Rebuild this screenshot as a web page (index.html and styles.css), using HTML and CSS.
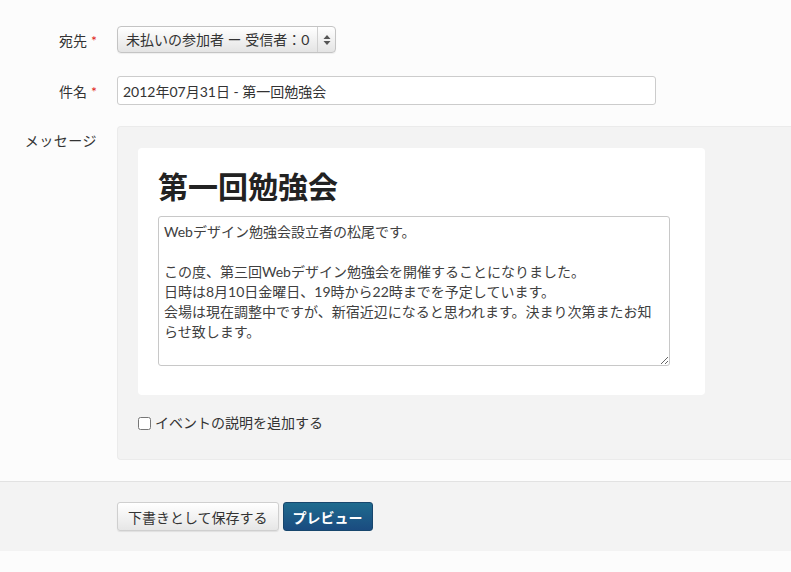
FILE: index.html
```html
<!DOCTYPE html>
<html lang="ja">
<head>
    <meta charset="UTF-8">
    <meta name="viewport" content="width=device-width, initial-scale=1.0">
    <link rel="stylesheet" href="styles.css">
    <title>メッセージ送信</title>
</head>
<body>
    <form class="mail-form">
        <div class="form-row row-to">
            <label class="form-label">宛先<span class="req">*</span></label>
            <div class="select-box">
                <span class="select-text">未払いの参加者 ー 受信者：0</span>
                <span class="select-arrows">
                    <svg width="8" height="12" viewBox="0 0 8 12">
                        <path d="M4 1 L7.5 5 L0.5 5 Z" fill="#555"/>
                        <path d="M4 11 L7.5 7 L0.5 7 Z" fill="#555"/>
                    </svg>
                </span>
            </div>
        </div>

        <div class="form-row row-subject">
            <label class="form-label" for="subject">件名<span class="req">*</span></label>
            <input type="text" id="subject" class="text-input" value="2012年07月31日 - 第一回勉強会">
        </div>

        <div class="form-row row-message">
            <label class="form-label label-message">メッセージ</label>
            <div class="message-panel">
                <div class="message-card">
                    <h1 class="message-title">第一回勉強会</h1>
                    <textarea class="message-body">Webデザイン勉強会設立者の松尾です。

この度、第三回Webデザイン勉強会を開催することになりました。
日時は8月10日金曜日、19時から22時までを予定しています。
会場は現在調整中ですが、新宿近辺になると思われます。決まり次第またお知らせ致します。

今回の勉強会はレスポンシブデザインをテーマに、実例を交えながら進めていく予定です。</textarea>
                </div>
                <label class="check-row">
                    <input type="checkbox" class="check">
                    <span>イベントの説明を追加する</span>
                </label>
            </div>
        </div>

        <div class="form-actions">
            <button type="button" class="btn btn-default">下書きとして保存する</button>
            <button type="button" class="btn btn-primary">プレビュー</button>
        </div>
    </form>
</body>
</html>
```

FILE: styles.css
```css
body {
    margin: 0;
    background-color: #fcfcfc;
    font-family: Lato, "Noto Sans CJK JP", sans-serif;
    font-size: 14px;
    color: #333;
    overflow: hidden;
}

.mail-form {
    padding-top: 26px;
}

.form-row {
    display: flex;
    align-items: center;
}

.row-to {
    margin-bottom: 23px;
}

.row-subject {
    margin-bottom: 21px;
}

.row-message {
    align-items: flex-start;
    margin-bottom: 21px;
}

.form-label {
    width: 97px;
    margin-right: 20px;
    text-align: right;
    color: #333;
    flex-shrink: 0;
}

.label-message {
    padding-top: 4px;
    letter-spacing: 0.5px;
}

.req {
    color: #e02020;
    margin-left: 4px;
}

.select-box {
    display: flex;
    align-items: stretch;
    width: 217px;
    height: 25px;
    border: 1px solid #c4c4c4;
    border-radius: 4px;
    background: linear-gradient(#ffffff, #e4e4e4);
    box-shadow: 0 1px 1px rgba(0, 0, 0, 0.06);
}

.select-text {
    flex: 1;
    padding-left: 8px;
    line-height: 25px;
    color: #333;
}

.select-arrows {
    display: flex;
    align-items: center;
    justify-content: center;
    width: 17px;
    border-left: 1px solid #d0d0d0;
}

.text-input {
    width: 527px;
    height: 27px;
    padding: 0 5px;
    border: 1px solid #cccccc;
    border-radius: 3px;
    background: #fff;
    font-family: Lato, "Noto Sans CJK JP", sans-serif;
    font-size: 14px;
    color: #333;
    box-sizing: content-box;
}

.message-panel {
    flex: 1;
    padding: 21px 0 26px 20px;
    background-color: #f3f3f3;
    border: 1px solid #ebebeb;
    border-right: none;
    border-radius: 4px 0 0 4px;
}

.message-card {
    width: 527px;
    padding: 20px 20px 29px 20px;
    background-color: #fff;
    border-radius: 4px;
}

.message-title {
    margin: 0 0 12px;
    font-size: 30px;
    line-height: 36px;
    font-weight: bold;
    color: #222;
}

.message-body {
    display: block;
    width: 500px;
    height: 138px;
    padding: 5px;
    border: 1px solid #c8c8c8;
    border-radius: 3px;
    font-family: Lato, "Noto Sans CJK JP", sans-serif;
    font-size: 14px;
    line-height: 20px;
    color: #404040;
    overflow: hidden;
    resize: vertical;
}

.check-row {
    display: flex;
    align-items: center;
    margin-top: 18px;
    line-height: 20px;
    color: #333;
}

.check {
    width: 13px;
    height: 13px;
    margin: 0 4px 0 0;
}

.form-actions {
    display: flex;
    gap: 4px;
    padding: 20px 0 20px 117px;
    background-color: #f3f3f3;
    border-top: 1px solid #e2e2e2;
}

.btn {
    height: 29px;
    padding: 0 10px;
    border-radius: 3px;
    font-family: Lato, "Noto Sans CJK JP", sans-serif;
    font-size: 14px;
    cursor: pointer;
}

.btn-default {
    background: linear-gradient(#ffffff, #e6e6e6);
    border: 1px solid #cfcfcf;
    color: #333;
    box-shadow: 0 1px 1px rgba(0, 0, 0, 0.08);
}

.btn-primary {
    padding: 0 9px;
    background: linear-gradient(#1f6b8e, #1a4b80);
    border: 1px solid #17466d;
    color: #fff;
    font-weight: bold;
}
```
